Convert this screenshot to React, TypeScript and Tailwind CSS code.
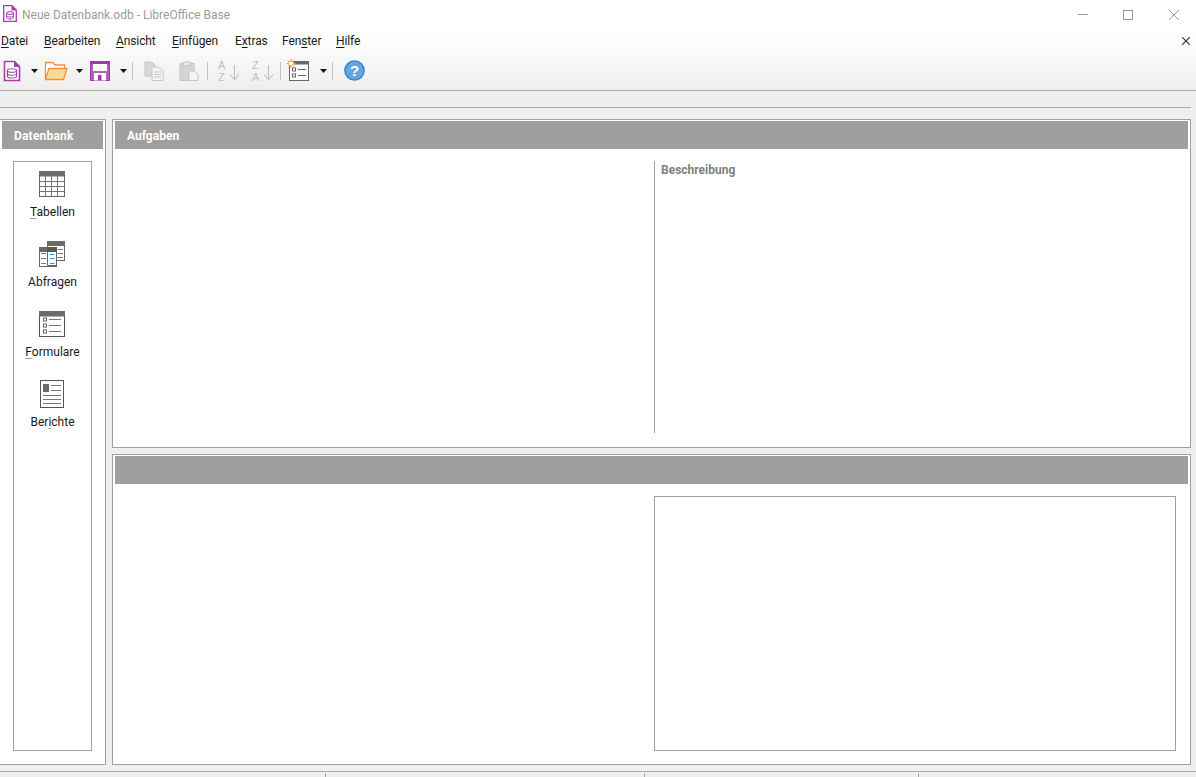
import type { ReactNode } from 'react'

const font = 'font-["Roboto","Noto_Sans",sans-serif]'

function BaseIcon() {
  return (
    <svg width="18" height="22" viewBox="0 0 18 22" className="shrink-0">
      <path d="M1.5 1.5H11.5L16.5 6.5V20.5H1.5Z" fill="#fff" stroke="#a23fa8" strokeWidth="1.6" />
      <path d="M11 1L17 7H11Z" fill="#a23fa8" />
      <ellipse cx="9" cy="10.5" rx="4.6" ry="1.8" fill="none" stroke="#a23fa8" strokeWidth="1.1" />
      <path d="M4.4 10.5V16.2C4.4 17.4 6.5 18 9 18S13.6 17.4 13.6 16.2V10.5M4.4 13.4C4.4 14.6 6.5 15.2 9 15.2S13.6 14.6 13.6 13.4" fill="none" stroke="#a23fa8" strokeWidth="1.1" />
    </svg>
  )
}

function FolderIcon() {
  return (
    <svg width="24" height="20" viewBox="0 0 24 20" className="shrink-0">
      <path d="M1.5 18.5V1.5H9L11 4H20.5V7" fill="#fff" stroke="#f0913a" strokeWidth="1.3" />
      <path d="M1.5 18.5L5 7.5H23L19.5 18.5Z" fill="#fbdc94" stroke="#f0913a" strokeWidth="1.3" />
    </svg>
  )
}

function SaveIcon() {
  return (
    <svg width="20" height="20" viewBox="0 0 20 20" className="shrink-0">
      <rect x="0.5" y="0.5" width="19" height="19" fill="#b45fc0" stroke="#9a3aa8" />
      <rect x="1" y="1" width="18" height="2" fill="#9a3aa8" />
      <rect x="3" y="3" width="14" height="7" fill="#fff" />
      <rect x="4" y="12" width="12" height="7.5" fill="#fff" />
      <rect x="8" y="14" width="3.5" height="5.5" fill="#9a3aa8" />
    </svg>
  )
}

function Arrow() {
  return (
    <svg width="7" height="4" viewBox="0 0 7 4" className="shrink-0">
      <path d="M0 0H7L3.5 4Z" fill="#111" />
    </svg>
  )
}

function Sep() {
  return <div className="w-px h-[18px] bg-[#c4c4c4] shrink-0" />
}

function CopyIcon() {
  return (
    <svg width="20" height="20" viewBox="0 0 20 20" className="shrink-0">
      <path d="M1 1H8L11 4V15H1Z" fill="#d8d8d8" stroke="#c6c6c6" />
      <path d="M8 6H14L19 10V19.5H8Z" fill="#f4f4f4" stroke="#c6c6c6" />
      <path d="M10 11H17M10 13.5H17M10 16H17" stroke="#c6c6c6" />
    </svg>
  )
}

function PasteIcon() {
  return (
    <svg width="20" height="20" viewBox="0 0 20 20" className="shrink-0">
      <rect x="1" y="2.5" width="14" height="17" fill="#d4d4d4" stroke="#c6c6c6" />
      <rect x="4.5" y="1" width="7" height="3.5" fill="#e8e8e8" stroke="#c6c6c6" />
      <path d="M10 10H15L19 13V19.5H10Z" fill="#f4f4f4" stroke="#c6c6c6" />
    </svg>
  )
}

function SortIcon({ top, bottom }: { top: string; bottom: string }) {
  return (
    <svg width="22" height="24" viewBox="0 0 22 24" className="shrink-0">
      <text x="0" y="10" fontSize="11" fontFamily="Liberation Sans" fill="#c0c0c0">{top}</text>
      <text x="0" y="22" fontSize="11" fontFamily="Liberation Sans" fill="#c0c0c0">{bottom}</text>
      <path d="M16.5 6V20M12 15.5L16.5 20.5L21 15.5" fill="none" stroke="#c0c0c0" strokeWidth="1.1" />
    </svg>
  )
}

function NewFormIcon() {
  return (
    <svg width="23" height="24" viewBox="0 0 23 24" className="shrink-0">
      <rect x="3.5" y="2.5" width="19" height="19" fill="#fff" stroke="#666" />
      <rect x="3" y="2" width="20" height="3.5" fill="#6a6a64" />
      <rect x="6.5" y="9" width="3" height="3" fill="#fff" stroke="#666" />
      <rect x="6.5" y="15" width="3" height="3" fill="#fff" stroke="#666" />
      <path d="M12 10.5H20M12 16.5H20" stroke="#666" />
      <circle cx="5" cy="4.5" r="2.6" fill="#fff" stroke="#f2a14a" />
      <path d="M5 0V2M5 7V9M0.5 4.5H2.5M7.5 4.5H9.5M1.8 1.3L3.2 2.7M6.8 6.3L8.2 7.7M8.2 1.3L6.8 2.7M3.2 6.3L1.8 7.7" stroke="#f2a14a" />
    </svg>
  )
}

function HelpIcon() {
  return (
    <svg width="21" height="21" viewBox="0 0 21 21" className="shrink-0">
      <circle cx="10.5" cy="10.5" r="9.6" fill="#62a7e4" stroke="#2f7fc6" strokeWidth="1.4" />
      <text x="10.5" y="16" textAnchor="middle" fontSize="15" fontWeight="700" fontFamily="Liberation Sans" fill="#fff">?</text>
    </svg>
  )
}

function TableIcon() {
  return (
    <svg width="26" height="26" viewBox="0 0 26 26">
      <rect x="0.5" y="0.5" width="25" height="25" fill="#fff" stroke="#666" />
      <rect x="0" y="0" width="26" height="5.5" fill="#6b6b65" />
      <path d="M0 10.5H26M0 15.5H26M0 20.5H26M6.5 5V26M12.5 5V26M18.5 5V26" stroke="#777" />
    </svg>
  )
}

function QueryIcon() {
  return (
    <svg width="26" height="26" viewBox="0 0 26 26">
      <rect x="8.5" y="0.5" width="17" height="19" fill="#fff" stroke="#666" />
      <rect x="8" y="0" width="18" height="5" fill="#6b6b65" />
      <path d="M18.5 8.5H24M18.5 12.5H24M18.5 16.5H24" stroke="#777" />
      <rect x="0.5" y="6.5" width="17" height="19" fill="#fff" stroke="#666" />
      <rect x="0" y="6" width="18" height="5" fill="#6b6b65" />
      <path d="M2 12.5H7M2 17.5H7M2 22.5H7M11 22.5H15.5" stroke="#777" />
      <path d="M8.5 6V24.5H17.5" fill="none" stroke="#666" />
      <rect x="8" y="6" width="10" height="5" fill="#5b5b55" />
      <path d="M11 13.5H15.5" stroke="#2f8fd8" />
      <path d="M11 17.5H15.5" stroke="#2f8fd8" />
    </svg>
  )
}

function FormIcon() {
  return (
    <svg width="26" height="26" viewBox="0 0 26 26">
      <rect x="0.5" y="0.5" width="25" height="25" fill="#fff" stroke="#555" />
      <rect x="0" y="0" width="26" height="5.5" fill="#6b6b65" />
      <rect x="4.5" y="7" width="3" height="3" fill="#fff" stroke="#666" />
      <rect x="4.5" y="13" width="3" height="3" fill="#fff" stroke="#666" />
      <rect x="4.5" y="19" width="3" height="3" fill="#fff" stroke="#666" />
      <path d="M10 8.5H22M10 14.5H22M10 20.5H22" stroke="#777" />
    </svg>
  )
}

function ReportIcon() {
  return (
    <svg width="24" height="28" viewBox="0 0 24 28" className="-mt-[1px]">
      <rect x="0.5" y="0.5" width="23" height="27" fill="#fff" stroke="#555" />
      <rect x="3" y="4" width="6" height="8" fill="#6b6b65" />
      <path d="M11 5.5H21M11 10.5H21M3 15.5H21M3 19.5H21M3 23.5H21" stroke="#777" />
    </svg>
  )
}

const menus: { before: string; key: string; after: string; width: string }[] = [
  { before: '', key: 'D', after: 'atei', width: 'w-[43px]' },
  { before: '', key: 'B', after: 'earbeiten', width: 'w-[72px]' },
  { before: '', key: 'A', after: 'nsicht', width: 'w-[56px]' },
  { before: '', key: 'E', after: 'infügen', width: 'w-[63px]' },
  { before: 'E', key: 'x', after: 'tras', width: 'w-[47px]' },
  { before: 'Fen', key: 's', after: 'ter', width: 'w-[54px]' },
  { before: '', key: 'H', after: 'ilfe', width: 'w-[40px]' },
]

function NavItem({ icon, label }: { icon: ReactNode; label: ReactNode }) {
  return (
    <div className="h-[70px] flex flex-col items-center">
      <div className="h-[29px] pr-[1px] flex items-start justify-center">{icon}</div>
      <div className="mt-[4px] text-[12px] leading-[16px] text-[#1a1a1a]">{label}</div>
    </div>
  )
}

function Mn({ children }: { children: ReactNode }) {
  return <span className="underline decoration-[#999] underline-offset-2">{children}</span>
}

function Header({ title }: { title?: string }) {
  return (
    <div className="h-[28px] bg-[#9f9f9f] flex items-center pl-[12px] pt-[1px] text-[12px] font-bold text-white">
      {title}
    </div>
  )
}

export default function App() {
  return (
    <div className={`w-[1196px] h-[777px] overflow-hidden flex flex-col bg-[#efefef] ${font}`}>
      {/* title bar */}
      <div className="h-[33px] bg-white flex items-center shrink-0 pb-[4px]">
        <svg width="14" height="17" viewBox="0 0 14 17" className="ml-[3px] mb-[2px] shrink-0">
          <path d="M0.7 0.7H9L13.3 5V16.3H0.7Z" fill="#fff" stroke="#a23fa8" strokeWidth="1.3" />
          <path d="M8.5 0.5L13.5 5.5H8.5Z" fill="#a23fa8" />
          <ellipse cx="7" cy="8" rx="3.4" ry="1.4" fill="none" stroke="#a23fa8" />
          <path d="M3.6 8V12.5C3.6 13.4 5 14 7 14S10.4 13.4 10.4 12.5V8M3.6 10.5C3.6 11.4 5 12 7 12S10.4 11.4 10.4 10.5" fill="none" stroke="#a23fa8" />
        </svg>
        <span className="ml-[5px] text-[12px] text-[#9c9c9c]">Neue Datenbank.odb - LibreOffice Base</span>
        <div className="ml-auto flex items-center">
          <div className="w-[10px] h-px bg-[#9a9a9a] mr-[35px]" />
          <div className="w-[10px] h-[10px] border border-[#9a9a9a] mr-[36px]" />
          <svg width="10" height="10" viewBox="0 0 10 10" className="mr-[17px]">
            <path d="M0 0L10 10M10 0L0 10" stroke="#9a9a9a" />
          </svg>
        </div>
      </div>

      {/* menu and toolbar */}
      <div className="h-[58px] shrink-0 bg-linear-to-b from-white to-[#eeeeee] border-b border-[#aaaaaa] flex flex-col">
        <div className="h-[16px] flex items-center text-[12px] tracking-[-0.1px] text-[#1a1a1a]">
          <div className="flex pl-[1px]">
            {menus.map(m => (
              <span key={m.key + m.after} className={m.width}>
                {m.before}
                <span className="underline underline-offset-2">{m.key}</span>
                {m.after}
              </span>
            ))}
          </div>
          <svg width="8" height="8" viewBox="0 0 8 8" className="ml-auto mr-[6px]">
            <path d="M0 0L8 8M8 0L0 8" stroke="#333" strokeWidth="1.2" />
          </svg>
        </div>
        <div className="flex-1 flex items-center pl-[3px] pt-[2px]">
          <BaseIcon />
          <div className="ml-[10px]"><Arrow /></div>
          <div className="ml-[6px]"><FolderIcon /></div>
          <div className="ml-[8px]"><Arrow /></div>
          <div className="ml-[7px]"><SaveIcon /></div>
          <div className="ml-[10px]"><Arrow /></div>
          <div className="ml-[5px]"><Sep /></div>
          <div className="ml-[11px]"><CopyIcon /></div>
          <div className="ml-[15px]"><PasteIcon /></div>
          <div className="ml-[8px]"><Sep /></div>
          <div className="ml-[10px]"><SortIcon top="A" bottom="Z" /></div>
          <div className="ml-[12px]"><SortIcon top="Z" bottom="A" /></div>
          <div className="ml-[6px]"><Sep /></div>
          <div className="ml-[5px]"><NewFormIcon /></div>
          <div className="ml-[11px]"><Arrow /></div>
          <div className="ml-[5px]"><Sep /></div>
          <div className="ml-[11px]"><HelpIcon /></div>
        </div>
      </div>

      {/* empty strip */}
      <div className="h-[17px] w-[1191px] shrink-0 border-b border-[#aaaaaa]" />

      {/* main */}
      <div className="mt-[11px] h-[646px] shrink-0 flex gap-[6px]">
        <div className="w-[106px] bg-white border-t border-r border-b border-[#a0a0a0] pt-[1px] pl-[2px] pr-[2px] flex flex-col">
          <div className="h-[28px] bg-[#9f9f9f] flex items-center pl-[12px] pt-[1px] text-[12px] font-bold tracking-[0.2px] text-white">
            Datenbank
          </div>
          <div className="mt-[12px] ml-[11px] w-[79px] h-[590px] border border-[#a0a0a0] pt-[9px]">
            <NavItem icon={<TableIcon />} label={<><Mn>T</Mn>abellen</>} />
            <NavItem icon={<QueryIcon />} label="Abfragen" />
            <NavItem icon={<FormIcon />} label={<><Mn>F</Mn>ormulare</>} />
            <NavItem icon={<ReportIcon />} label={<>Ber<Mn>i</Mn>chte</>} />
          </div>
        </div>

        <div className="w-[1079px] flex flex-col gap-[6px]">
          <div className="h-[329px] bg-white border border-[#a0a0a0] pt-[1px] px-[2px]">
            <Header title="Aufgaben" />
            <div className="mt-[12px] flex h-[272px]">
              <div className="w-[539px] shrink-0" />
              <div className="flex-1 border-l border-[#a0a0a0] pl-[6px] text-[12px] font-bold text-[#808080]">
                Beschreibung
              </div>
            </div>
          </div>
          <div className="h-[311px] bg-white border border-[#a0a0a0] pt-[1px] px-[2px]">
            <Header />
            <div className="mt-[12px] flex">
              <div className="w-[539px] shrink-0" />
              <div className="w-[522px] h-[255px] border border-[#a0a0a0]" />
            </div>
          </div>
        </div>
      </div>

      {/* status bar */}
      <div className="mt-[6px] flex-1 border-t border-[#aaaaaa] flex pt-[1px]">
        <div className="w-[326px] border-r border-[#aaaaaa]" />
        <div className="w-[319px] border-r border-[#aaaaaa]" />
        <div className="w-[274px] border-r border-[#aaaaaa]" />
      </div>
    </div>
  )
}
